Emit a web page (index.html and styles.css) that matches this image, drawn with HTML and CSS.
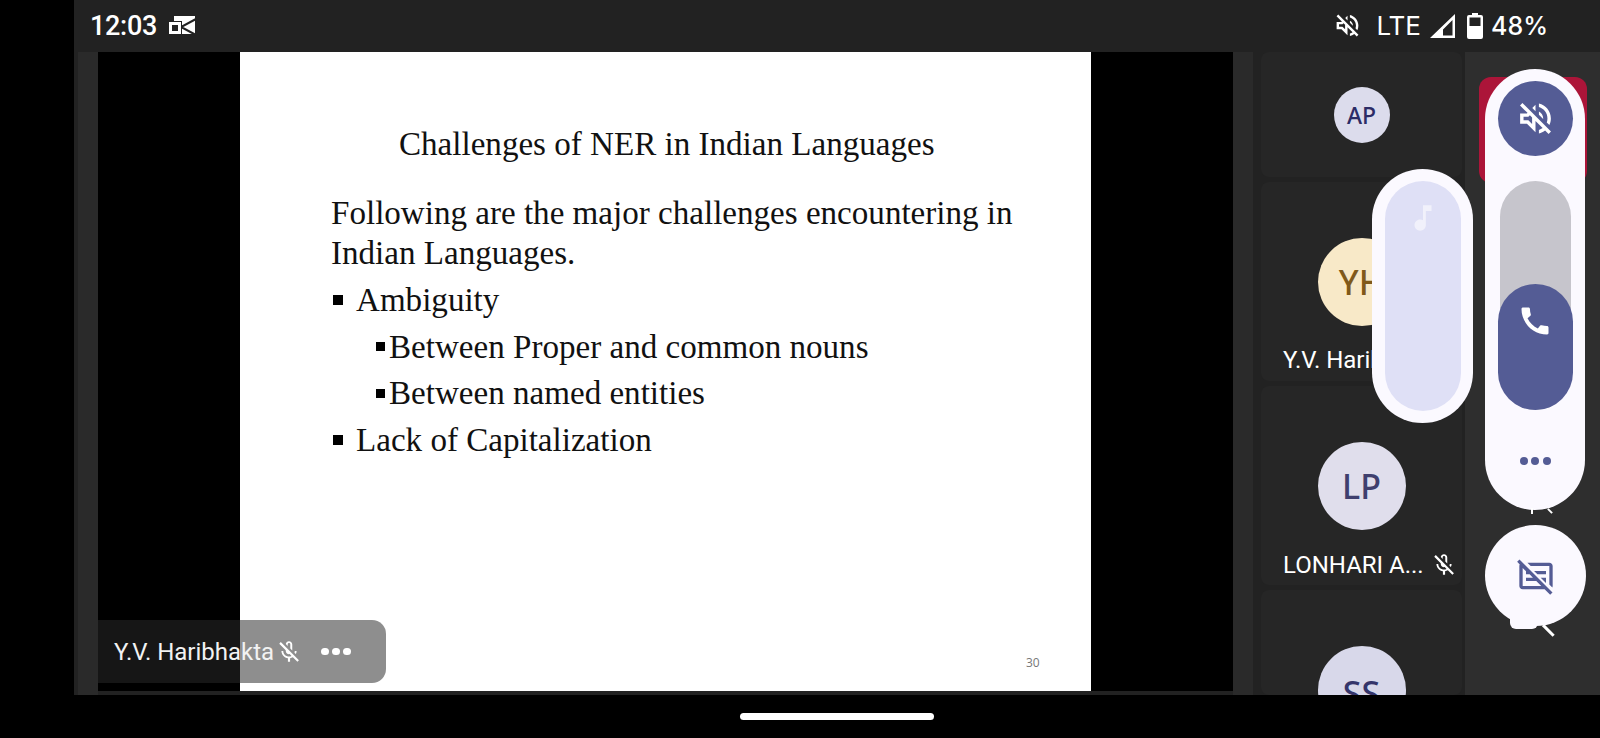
FILE: index.html
```html
<!DOCTYPE html>
<html lang="en">
<head>
<meta charset="utf-8">
<title>Meeting</title>
<link rel="stylesheet" href="styles.css">
</head>
<body>
<div class="app">
  <header class="status">
    <div class="status-left">
      <span class="time">12:03</span>
      <svg class="outlook" viewBox="0 0 28 20"><path fill="#fff" d="M6 0h21v18H6z"/><path fill="none" stroke="#222" stroke-width="2" d="M28 3 13 11l15 8"/><path fill="#222" d="M0 5h14v14H0z"/><path fill="#fff" fill-rule="evenodd" d="M1 6h12v12H1zM4 9v6h6V9z"/></svg>
    </div>
    <div class="status-right">
      <svg class="ico-mute" viewBox="0 0 24 24"><path fill="#fff" d="M4.340 2.930 2.930 4.340 7.290 8.700 7 9H3v6h4l5 5v-6.590l4.180 4.180c-.65.49-1.380.88-2.180 1.110v2.060c1.340-.3 2.570-.92 3.610-1.750l2.050 2.050 1.410-1.410L4.340 2.930zM10 15.170 7.830 13H5v-2h2.830l.88-.88L10 11.410v3.760zM19 12c0 .82-.15 1.610-.41 2.340l1.530 1.530c.56-1.170.88-2.480.88-3.870 0-4.280-2.990-7.860-7-8.770v2.060c2.890.86 5 3.540 5 6.710zm-7-8-1.880 1.880L12 7.760zm4.500 8c0-1.770-1.020-3.290-2.500-4.030v1.790l2.480 2.480c.01-.08.02-.16.02-.24z"/></svg>
      <span class="lte">LTE</span>
      <svg class="signal" viewBox="0 0 25 24"><path fill="#fff" fill-rule="evenodd" d="M25 0v24H0zM22.500 6 13 15.500V21.500h9.500z"/></svg>
      <svg class="battery" viewBox="0 0 16 26"><path fill="#fff" fill-rule="evenodd" d="M5 0h6v2h3a2 2 0 0 1 2 2v20a2 2 0 0 1-2 2H2a2 2 0 0 1-2-2V4a2 2 0 0 1 2-2h3zM2.500 4.500V13h11V4.500z"/></svg>
      <span class="pct">48%</span>
    </div>
  </header>

  <main class="content">
    <div class="strip"></div>
    <section class="stage">
      <article class="slide">
        <h1 class="slide-title">Challenges of NER in Indian Languages</h1>
        <p class="slide-intro">Following are the major challenges encountering in<br>Indian Languages.</p>
        <ul class="bullets">
          <li class="lvl1">Ambiguity</li>
          <li class="lvl2">Between Proper and common nouns</li>
          <li class="lvl2">Between named entities</li>
          <li class="lvl1">Lack of Capitalization</li>
        </ul>
        <span class="page-no">30</span>
      </article>
      <div class="name-pill">
        <span class="pill-name">Y.V. Haribhakta</span>
        <svg class="mic" viewBox="0 0 24 24"><use href="#mic-off"/></svg>
        <span class="pill-dots"><i></i><i></i><i></i></span>
      </div>
    </section>
    <div class="strip strip-right"></div>

    <aside class="tiles">
      <div class="tile tile-ap"><span class="avatar small av-ap">AP</span></div>
      <div class="tile tile-tall">
        <span class="avatar av-yh">YH</span>
        <div class="tile-name">Y.V. Haribhakta</div>
      </div>
      <div class="tile tile-tall">
        <span class="avatar av-lp">LP</span>
        <div class="tile-name"><span>LONHARI A...</span><svg class="mic tile-mic" viewBox="0 0 24 24"><use href="#mic-off"/></svg></div>
      </div>
      <div class="tile tile-last"><span class="avatar av-ss">SS</span></div>
    </aside>

    <aside class="panel"><div class="red-tile"></div></aside>
  </main>

  <footer class="nav"><span class="home"></span></footer>
</div>

<div class="vol-main">
  <span class="vol-mute">
    <svg viewBox="0 0 24 24"><path fill="#fff" d="M4.340 2.930 2.930 4.340 7.290 8.700 7 9H3v6h4l5 5v-6.590l4.180 4.180c-.65.49-1.380.88-2.180 1.110v2.060c1.340-.3 2.570-.92 3.610-1.750l2.050 2.050 1.410-1.410L4.340 2.930zM10 15.170 7.830 13H5v-2h2.830l.88-.88L10 11.410v3.760zM19 12c0 .82-.15 1.610-.41 2.340l1.530 1.530c.56-1.170.88-2.480.88-3.870 0-4.280-2.990-7.860-7-8.770v2.060c2.890.86 5 3.540 5 6.710zm-7-8-1.880 1.880L12 7.760zm4.500 8c0-1.770-1.020-3.290-2.500-4.030v1.790l2.480 2.480c.01-.08.02-.16.02-.24z"/></svg>
  </span>
  <div class="vol-track">
    <div class="vol-fill">
      <svg viewBox="0 0 24 24"><path fill="#fff" d="M20.010 15.380c-1.230 0-2.420-.2-3.530-.56-.35-.12-.74-.03-1.010.24l-1.570 1.970c-2.830-1.350-5.480-3.900-6.890-6.830l1.950-1.660c.27-.28.35-.67.24-1.020-.37-1.110-.56-2.300-.56-3.530 0-.54-.45-.99-.99-.99H4.190C3.650 3 3 3.240 3 3.990 3 13.280 10.730 21 20.010 21c.71 0 .99-.63.99-1.180v-3.450c0-.54-.45-.99-.99-.99z"/></svg>
    </div>
  </div>
  <span class="vol-dots"><i></i><i></i><i></i></span>
</div>

<div class="vol-music">
  <div class="vol-music-inner">
    <svg viewBox="0 0 24 24"><path fill="#f1f1fb" d="M12 3v10.550c-.59-.34-1.270-.55-2-.55-2.210 0-4 1.790-4 4s1.790 4 4 4 4-1.790 4-4V7h4V3h-6z"/></svg>
  </div>
</div>

<div class="cap-blob"></div>
<span class="cap-slash"></span>
<span class="peek peek-a"></span>
<span class="peek peek-b"></span>
<div class="cap-btn">
  <svg viewBox="0 0 24 24"><path fill="#545c95" d="M6.830 4H20c1.110 0 2 .9 2 2v12c0 .34-.09.66-.23.94L20 17.170V6H8.830zM20.490 23.310 17.170 20H4c-1.110 0-2-.9-2-2V6c0-.34.08-.66.23-.94L.69 3.510 2.100 2.100l19.800 19.800zM15.170 18l-3-3H6v-2h4.170l-2-2H6V9.170l-2-2V18zM18 9h-7.170l2 2H18zM18 13h-3.170L18 16.170z"/></svg>
</div>

<svg class="defs" aria-hidden="true"><defs><symbol id="mic-off" viewBox="0 0 24 24"><path fill="#fff" d="M10.800 4.900c0-.66.54-1.200 1.200-1.200s1.200.54 1.200 1.200l-.01 3.910L15 10.600V5c0-1.660-1.340-3-3-3-1.540 0-2.790 1.160-2.960 2.650l1.760 1.760V4.900zM19 11h-1.700c0 .58-.1 1.130-.27 1.640l1.270 1.270c.44-.88.7-1.870.7-2.910zM4.410 2.860 3 4.270l6 6V11c0 1.660 1.340 3 3 3 .23 0 .44-.03.65-.08l1.660 1.660c-.71.33-1.500.52-2.310.52-2.760 0-5.300-2.100-5.300-5.100H5c0 3.410 2.720 6.230 6 6.720V21h2v-3.280c.91-.13 1.770-.45 2.550-.9l4.200 4.200 1.410-1.410L4.410 2.860z"/></symbol></defs></svg>
</body>
</html>
```

FILE: styles.css
```css
* { box-sizing: border-box; }
html, body { margin: 0; height: 100%; background: #000; overflow: hidden; }
body { font-family: Roboto, "Liberation Sans", sans-serif; color: #fff; }
.defs { width: 0; height: 0; display: block; }

.app { width: 1600px; height: 738px; padding-left: 74px; display: flex; flex-direction: column; }

/* status bar */
.status { height: 52px; flex: none; background: #222; display: flex; align-items: center; justify-content: space-between; padding: 0 52px 1px 16px; }
.status-left, .status-right { display: flex; align-items: center; }
.time { font-size: 27px; font-weight: 500; letter-spacing: -.3px; }
.outlook { width: 28px; height: 20px; margin-left: 11px; }
.ico-mute { width: 29px; height: 29px; margin-right: 14px; }
.lte { font: 400 26px Inter, sans-serif; }
.signal { width: 25px; height: 24px; margin-left: 9px; }
.battery { width: 16px; height: 26px; margin-left: 12px; }
.pct { font: 500 25px Inter, sans-serif; margin-left: 8px; }

/* content */
.content { height: 643px; flex: none; background: #222; display: flex; padding-left: 4px; }
.strip { width: 20px; background: #2a2a2a; flex: none; }
.strip-right { margin-right: 8px; }

.stage { width: 1135px; height: 639px; background: #000; flex: none; display: flex; justify-content: center; position: relative; }
.slide { width: 851px; background: #fff; color: #111; font-family: "Liberation Serif", serif; padding: 0 0 0 91px; position: relative; }
.slide-title { font-size: 33.100px; font-weight: 400; margin: 72px 0 0; line-height: 40px; padding-left: 68px; white-space: nowrap; }
.slide-intro { font-size: 33.100px; line-height: 40px; margin: 29px 0 0; white-space: nowrap; }
.bullets { list-style: none; margin: 4px 0 0; padding: 0; font-size: 33.100px; }
.bullets li { height: 46.500px; line-height: 46px; display: flex; align-items: center; }
.lvl1::before, .lvl2::before { content: ""; width: 9px; height: 9px; background: #000; flex: none; }
.lvl1::before { width: 10px; height: 10px; margin: 0 13px 0 2px; }
.lvl2::before { margin: 0 4px 0 45px; }
.page-no { position: absolute; left: 786px; top: 602px; font: 12px "Open Sans", sans-serif; color: #777; }

.name-pill { position: absolute; left: 0; top: 568px; width: 288px; height: 63px; padding-left: 16px; border-radius: 0 14px 14px 0; background: rgba(41, 41, 41, .53); display: flex; align-items: center; }
.pill-name { font-size: 24px; color: #f2f2f2; width: 162px; white-space: nowrap; }
.mic { width: 26px; height: 26px; flex: none; }
.pill-dots { display: flex; gap: 3.500px; margin-left: 19px; }
.pill-dots i { width: 7.500px; height: 7.500px; border-radius: 50%; background: #fff; }

/* tiles */
.tiles { width: 201px; height: 643px; flex: none; display: flex; flex-direction: column; gap: 5px; overflow: hidden; }
.tile { background: #262626; border-radius: 8px; flex: none; position: relative; display: flex; flex-direction: column; align-items: center; overflow: hidden; }
.tile-ap { height: 125px; padding-top: 35px; }
.tile-tall { height: 199px; padding-top: 56px; }
.tile-last { height: 105px; padding-top: 56px; }
.avatar { width: 88px; height: 88px; border-radius: 50%; flex: none; display: flex; align-items: center; justify-content: center; font: 500 34px "Noto Sans", sans-serif; }
.avatar.small { width: 56px; height: 56px; font-size: 23px; font-weight: 500; }
.av-ap { background: #dcdcec; color: #2c2c66; }
.av-yh { background: #f8e9c8; color: #80591a; }
.av-lp { background: #e0deec; color: #3f3f6e; }
.av-ss { background: #d8d8ea; color: #35356b; padding-top: 5px; }
.tile-name { align-self: stretch; margin-top: 22px; padding-left: 22px; font-size: 24px; line-height: 24px; display: flex; align-items: center; white-space: nowrap; }
.tile-mic { margin-left: 7px; }

/* right panel */
.panel { width: 135px; margin-left: 3px; flex: none; background: #2e2e2e; padding: 25px 0 0 14px; }
.red-tile { width: 108px; height: 106px; background: #ac1539; border-radius: 12px; }

/* nav */
.nav { flex: 1; display: flex; justify-content: center; align-items: flex-start; padding-top: 18px; background: #000; }
.home { width: 194px; height: 7px; border-radius: 4px; background: #fff; }

/* system volume overlay */
.vol-main { position: absolute; left: 1485px; top: 69px; width: 100px; height: 441px; border-radius: 50px; background: #fbf9ff; display: flex; flex-direction: column; align-items: center; padding-top: 12px; }
.vol-mute { width: 75px; height: 75px; border-radius: 50%; background: #545c95; flex: none; display: flex; align-items: center; justify-content: center; }
.vol-mute svg { width: 41px; height: 41px; }
.vol-track { width: 71px; height: 229px; margin-top: 25px; border-radius: 36px; background: #c6c5cc; position: relative; flex: none; }
.vol-fill { position: absolute; left: -2px; bottom: 0; width: 75px; height: 126px; border-radius: 38px; background: #545c95; display: flex; justify-content: center; padding-top: 19px; }
.vol-fill svg { width: 36px; height: 36px; }
.vol-dots { display: flex; gap: 3.500px; margin-top: 47px; }
.vol-dots i { width: 8px; height: 8px; border-radius: 50%; background: #545c95; }

.vol-music { position: absolute; left: 1372px; top: 169px; width: 101px; height: 254px; border-radius: 51px; background: #fbf9ff; padding: 12px 12.500px; }
.vol-music-inner { height: 230px; border-radius: 38px; background: #dfe0f6; display: flex; justify-content: center; padding-top: 20px; }
.vol-music-inner svg { width: 34px; height: 34px; }

.cap-btn { position: absolute; left: 1485px; top: 525px; width: 101px; height: 101px; border-radius: 50%; background: #fbf9ff; display: flex; align-items: center; justify-content: center; }
.cap-btn svg { width: 40px; height: 40px; }
.cap-blob { position: absolute; left: 1510px; top: 612px; width: 28px; height: 17px; border-radius: 0 0 6px 6px; background: #fbf9ff; }
.cap-slash { position: absolute; left: 1541px; top: 629px; width: 15px; height: 2.500px; background: #fff; transform: rotate(45deg); }
.peek { position: absolute; background: #fff; height: 6px; width: 2px; top: 508px; }
.peek-a { left: 1531px; }
.peek-b { left: 1549px; transform: rotate(-45deg); }
```
